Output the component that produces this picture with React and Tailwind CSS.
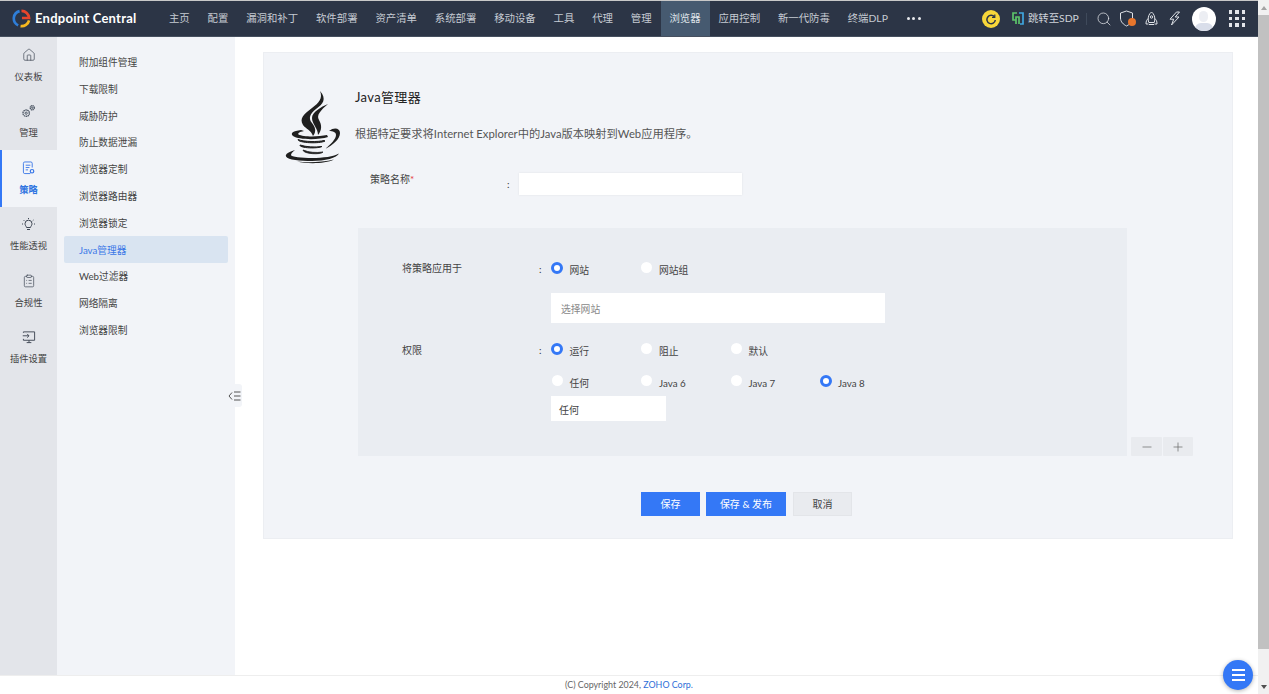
import React from "react";
import { House, ClipboardList, Search, Minus, Plus } from "lucide-react";

const FONT = "[font-family:Lato,'Noto_Sans_CJK_SC',sans-serif]";

const nav = [
  ["主页", false], ["配置", false], ["漏洞和补丁", false], ["软件部署", false], ["资产清单", false],
  ["系统部署", false], ["移动设备", false], ["工具", false], ["代理", false], ["管理", false],
  ["浏览器", true], ["应用控制", false], ["新一代防毒", false], ["终端DLP", false],
];

const subItems = ["附加组件管理", "下载限制", "威胁防护", "防止数据泄漏", "浏览器定制", "浏览器路由器", "浏览器锁定", "Java管理器", "Web过滤器", "网络隔离", "浏览器限制"];

function Logo() {
  return (
    <svg width="19" height="19" viewBox="0 0 20 20" fill="none" strokeWidth="2.8">
      <path d="M8 2.2A8 8 0 0 0 6.5 17.2" stroke="#2f7ed8" />
      <path d="M10 2A8 8 0 0 1 18 9.5H10.500" stroke="#e8452c" />
      <path d="M18 12A8 8 0 0 1 9 18" stroke="#f5b81f" />
    </svg>
  );
}

function GearsIcon() {
  return (
    <svg width="15" height="15" viewBox="0 0 16 16" fill="none" stroke="#4b5563" strokeWidth="1">
      <circle cx="5.5" cy="9.8" r="3.4" strokeDasharray="1.6 .5" strokeWidth="1.4" />
      <circle cx="5.5" cy="9.8" r="1.2" />
      <circle cx="12" cy="4" r="2.2" strokeDasharray="1.2 .4" strokeWidth="1.4" />
      <circle cx="12" cy="4" r=".7" />
    </svg>
  );
}

function PolicyIcon() {
  return (
    <svg width="13" height="14" viewBox="0 0 14 15" fill="none" stroke="#3b78e7" strokeWidth="1">
      <path d="M9 13.5H3a1.5 1.5 0 0 1-1.5-1.5V2.5A1.5 1.5 0 0 1 3 1h6.5A1.5 1.5 0 0 1 11 2.5V7" />
      <path d="M4 4.500h5M4 7h4M4 9.500h2.500" />
      <circle cx="10.8" cy="11" r="1.9" strokeWidth="1.3" />
    </svg>
  );
}

function PluginIcon() {
  return (
    <svg width="14" height="14" viewBox="0 0 15 15" fill="none" stroke="#3f4754" strokeWidth="1">
      <path d="M1.5 3V2h12v9h-12V9.5M5 13.5h5M7.5 11v2.500" />
      <path d="M.8 6.2h6.7M5.5 4.200l2 2-2 2" />
    </svg>
  );
}

function BulbIcon() {
  return (
    <svg width="15" height="15" viewBox="0 0 15 15" fill="none" stroke="#3f4754" strokeWidth="1">
      <path d="M5.5 10.5C5.200 9 4 8.500 4 6.700a3.500 3.500 0 0 1 7 0C11 8.500 9.800 9 9.500 10.500z" />
      <path d="M6 12.500h3M7.500 1v1M2.500 3l.8.8M12.500 3l-.8.8M1 7h1M13 7h1" />
    </svg>
  );
}

function RocketIcon() {
  return (
    <svg className="ml-[9px]" width="13" height="15" viewBox="0 0 13 15" fill="none" stroke="#dfe2e7" strokeWidth="1">
      <path d="M6.5 1C9 3 9.800 5.500 9.800 8c0 1.500-.3 2.700-.6 3.500H3.800C3.500 10.700 3.200 9.500 3.200 8c0-2.500.8-5 3.300-7z" />
      <path d="M3.300 7.500C1.800 8.500 1 10 1 13h2.500M9.700 7.500C11.200 8.500 12 10 12 13H9.500M4 13.500h5" />
      <circle cx="6.500" cy="6" r="1.200" />
    </svg>
  );
}

function BoltIcon() {
  return (
    <svg className="ml-[10px]" width="13" height="15" viewBox="0 0 13 15" fill="none" stroke="#dfe2e7" strokeWidth="1" strokeLinejoin="round">
      <path d="M8.500 1L2 8.200h3.700L3.500 14 11 6H7.200L11.500 1z" />
    </svg>
  );
}

const railItems = [
  ["仪表板", <House size={14} strokeWidth={1.2} color="#3f4754" />, false],
  ["管理", <GearsIcon />, false],
  ["策略", <PolicyIcon />, true],
  ["性能透视", <BulbIcon />, false],
  ["合规性", <ClipboardList size={14} strokeWidth={1.2} color="#3f4754" />, false],
  ["插件设置", <PluginIcon />, false],
];

function JavaIcon() {
  return (
    <svg width="56" height="74" viewBox="0 0 56 74" fill="#1f1f1f">
      <path d="M35 1C38 8 34 13 27 18C19 24 14 28 18 35C21 39 26 40 28 46C32 41 30 37 27 33C23 28 25 24 31 19C38 14 42 9 35 1z" />
      <path d="M43 14C36 17 27 22 27 28C27 34 33 38 33 45C37 40 37 35 34 30C31 25 36 20 43 14z" />
      <path d="M16 40C8 41 5 43 8 46C14 50 34 50 43 47L42 45C33 47 18 47 13.500 44.500C12.500 43.500 14 42 19 41z" />
      <path d="M13 49.500C13 53 35 54 40 51L39 50.500C33 52 19 52 13 49.500z" strokeWidth="1" stroke="#1f1f1f" />
      <path d="M15 55C14 58 32 59 37 56.500C30 57.500 21 57 15 55z" stroke="#1f1f1f" strokeWidth="1" />
      <path d="M18 60C18 64 36 65 38 62C31 63 24 62.500 18 60z" stroke="#1f1f1f" strokeWidth=".8" />
      <path d="M44 41C49 37 55 38 55 43C55 49 48 55 40 59C46 54 51 49 51 45C51 42 48 41 44 41z" />
      <path d="M10 60C4 62 0 64 1 66.500C3 70 15 71 27 71C40 71 52 68 54 63.500C49 66.500 38 68 27 68C17 68 6 67 6 65C6 63 8 62 10 60z" />
      <path d="M12 71.500C22 74 40 74 49 69.500C38 72 24 73 12 71.500z" />
    </svg>
  );
}

function Radio({ on }) {
  return on ? (
    <span className="block w-[12px] h-[12px] rounded-full bg-white border-[3px] border-[#3478f6] shrink-0" />
  ) : (
    <span className="block w-[11px] h-[11px] mx-[0.5px] rounded-full bg-white shrink-0" />
  );
}

function RadioOpt({ label, on }) {
  return (
    <div className="flex items-start gap-[6.5px] w-[89.5px]">
      <Radio on={on} />
      <span className="text-[9.8px] leading-[14px] text-[#444] translate-y-[1px] whitespace-nowrap">{label}</span>
    </div>
  );
}

function Colon() {
  return <span className="w-[11px] text-[10px] leading-[14px] text-[#333]">:</span>;
}

export default function App() {
  return (
    <div className={`flex w-[1269px] h-[694px] overflow-hidden bg-white ${FONT}`}>
      <div className="relative flex flex-col w-[1258px] h-full">
        <header className="flex items-center h-[37px] bg-[#2c3546] border-t border-t-[#c8c8c8] border-b border-b-[#46505f] shrink-0">
          <div className="flex items-center w-[160px] pl-[12px] gap-[4px] shrink-0">
            <Logo />
            <span className="text-[13px] font-bold text-white tracking-[.25px] whitespace-nowrap">Endpoint Central</span>
          </div>
          <nav className="flex items-stretch h-full">
            {nav.map(([t, a]) => (
              <span key={t} className={`flex items-center px-[8.93px] text-[10.4px] whitespace-nowrap ${a ? "bg-[#465a70] text-[#dfe3e8]" : "text-[#c6cbd3]"}`}>{t}</span>
            ))}
            <span className="flex items-center gap-[2.5px] pl-[10px]">
              <i className="block w-[3px] h-[3px] rounded-full bg-[#e8eaee]" />
              <i className="block w-[3px] h-[3px] rounded-full bg-[#e8eaee]" />
              <i className="block w-[3px] h-[3px] rounded-full bg-[#e8eaee]" />
            </span>
          </nav>
          <div className="flex items-center ml-[61px]">
            <span className="flex items-center justify-center w-[18px] h-[18px] rounded-full bg-[#f8d73a]">
              <svg width="12" height="12" viewBox="0 0 12 12" fill="none" stroke="#2c3546" strokeWidth="1.5">
                <path d="M9.5 4A4.200 4.200 0 1 0 10.300 7" />
                <path d="M9.800 1.500V4.300H7" strokeWidth="1.2" />
              </svg>
            </span>
            <svg className="ml-[12px]" width="12" height="13" viewBox="0 0 12 13" fill="none" strokeWidth="1.7">
              <path d="M5 1H1v7h3" stroke="#5cc46a" />
              <path d="M4 12V5h3v7" stroke="#5cc46a" />
              <path d="M7 1h4v11H8" stroke="#3fa6e0" />
            </svg>
            <span className="ml-[4px] text-[10.4px] text-[#cfd3da] whitespace-nowrap">跳转至SDP</span>
            <span className="ml-[7px] w-px h-[12px] bg-[#3f4a5b]" />
            <Search className="ml-[9px]" size={16} strokeWidth={1.1} color="#e6e8ec" />
            <span className="relative ml-[7px] w-[17px] h-[17px]">
              <svg width="15" height="17" viewBox="0 0 15 17" fill="none" stroke="#dfe2e7" strokeWidth="1">
                <path d="M7.5 1l6 2v5c0 4-3 6.500-6 8-3-1.500-6-4-6-8V3z" />
              </svg>
              <span className="absolute right-0 bottom-[1px] w-[8px] h-[8px] rounded-full bg-[#e8762c]" />
            </span>
            <RocketIcon />
            <BoltIcon />
            <span className="relative ml-[11px] w-[24px] h-[24px] rounded-full bg-white overflow-hidden">
              <span className="absolute left-[7.5px] top-[4px] w-[9px] h-[11px] rounded-full bg-[#eceef3]" />
              <span className="absolute left-[3px] top-[16px] w-[18px] h-[12px] rounded-full bg-[#d9deea]" />
            </span>
            <span className="ml-[13px] grid grid-cols-3 gap-[3px]">
              {[0, 1, 2, 3, 4, 5, 6, 7, 8].map((i) => (
                <i key={i} className="block w-[3.5px] h-[3.5px] bg-[#e3e5ea]" />
              ))}
            </span>
          </div>
        </header>

        <div className="flex flex-1 min-h-0">
          <aside className="w-[57px] bg-[#e3e5ea] shrink-0">
            {railItems.map(([t, icon, a]) => (
              <div key={t} className={`flex flex-col items-center h-[56.5px] pt-[10px] gap-[7.5px] ${a ? "bg-[#f2f4f8] border-l-2 border-l-[#3478f6] pr-[2px]" : ""}`}>
                <span className="flex items-center justify-center h-[15px]">{icon}</span>
                <span className={`text-[9.3px] leading-[14px] whitespace-nowrap ${a ? "text-[#2f74e0] font-bold" : "text-[#444]"}`}>{t}</span>
              </div>
            ))}
          </aside>
          <aside className="w-[178px] bg-[#f2f4f8] pt-[11.9px] px-[7px] shrink-0">
            {subItems.map((t) => {
              const a = t === "Java管理器";
              return (
                <div key={t} className={`flex items-center h-[26.8px] pl-[15px] text-[9.7px] whitespace-nowrap rounded-[2px] ${a ? "bg-[#d9e4f1] text-[#3b78e7]" : "text-[#444]"}`}>{t}</div>
              );
            })}
          </aside>
          <main className="flex-1 min-w-0 pl-[28px] pr-[25px] pt-[15px]">
            <section className="h-[487px] bg-[#f2f4f8] border border-[#eceef2] pt-[37px] pl-[21px]">
              <div className="flex">
                <JavaIcon />
                <div className="ml-[14px] -mt-[1px]">
                  <h1 className="text-[13px] leading-[16px] text-[#222] font-normal tracking-[.35px]">Java管理器</h1>
                  <p className="mt-[21px] text-[11.27px] leading-[16px] text-[#555] whitespace-nowrap">根据特定要求将Internet Explorer中的Java版本映射到Web应用程序。</p>
                </div>
              </div>
              <div className="flex items-start mt-[9px] ml-[85px]">
                <span className="w-[137px] text-[10px] leading-[14px] text-[#444] -translate-y-[1px]">策略名称<span className="text-[#e5383b]">*</span></span>
                <span className="w-[12px] text-[10px] leading-[14px] text-[#333] mt-[4px]">:</span>
                <div className="w-[223px] h-[22px] bg-white shadow-[0_0_2px_rgba(0,0,0,0.08)]" />
              </div>
              <div className="flex items-end mt-[33px] ml-[73px]">
                <div className="w-[769px] h-[228px] bg-[#eaedf2] pl-[44px] pt-[34px] shrink-0">
                  <div className="flex items-start">
                    <span className="w-[137px] text-[10px] leading-[14px] text-[#444] -translate-y-[1px]">将策略应用于</span>
                    <Colon />
                    <span className="w-[1px]" />
                    <RadioOpt label="网站" on />
                    <RadioOpt label="网站组" />
                  </div>
                  <div className="ml-[149px] mt-[17px] w-[334px] h-[30px] bg-white flex items-center pl-[10px] pt-[3px] text-[9.8px] text-[#888]">选择网站</div>
                  <div className="flex items-start mt-[20px]">
                    <span className="w-[137px] text-[10px] leading-[14px] text-[#444]">权限</span>
                    <Colon />
                    <span className="w-[1px]" />
                    <RadioOpt label="运行" on />
                    <RadioOpt label="阻止" />
                    <RadioOpt label="默认" />
                  </div>
                  <div className="flex items-start ml-[149px] mt-[18px]">
                    <RadioOpt label="任何" />
                    <RadioOpt label="Java 6" />
                    <RadioOpt label="Java 7" />
                    <RadioOpt label="Java 8" on />
                  </div>
                  <div className="ml-[149px] mt-[7px] w-[115px] h-[25px] bg-white flex items-center pl-[8px] pt-[3px] text-[10px] text-[#444]">任何</div>
                </div>
                <div className="flex gap-[1px] ml-[4px]">
                  <span className="flex items-center justify-center w-[31px] h-[19px] bg-[#e9ebef] rounded-[1px]"><Minus size={14} strokeWidth={1.2} color="#666" /></span>
                  <span className="flex items-center justify-center w-[30px] h-[19px] bg-[#e9ebef] rounded-[1px]"><Plus size={14} strokeWidth={1.2} color="#666" /></span>
                </div>
              </div>
              <div className="flex justify-start mt-[36px] ml-[356px]">
                <span className="flex items-center justify-center w-[59px] h-[24px] bg-[#3478f6] text-white text-[10px]">保存</span>
                <span className="flex items-center justify-center w-[80px] h-[24px] ml-[6px] bg-[#3478f6] text-white text-[10px]">保存 &amp; 发布</span>
                <span className="flex items-center justify-center w-[59px] h-[24px] ml-[7px] bg-[#e9ebef] border border-[#e3e5e9] text-[#444] text-[10px]">取消</span>
              </div>
            </section>
          </main>
        </div>

        <footer className="h-[19px] shrink-0 border-t border-[#eeeeee] bg-white flex items-center justify-center text-[8.9px] text-[#666]">
          (C) Copyright 2024,&nbsp;<span className="text-[#2f6fd8]">ZOHO Corp.</span>
        </footer>

        <div className="absolute left-[226px] top-[384px] w-[16px] h-[23px] bg-[#f2f4f8] rounded-r-[3px] flex items-center justify-center">
          <svg width="13" height="10" viewBox="0 0 13 10" fill="none" stroke="#555" strokeWidth="1">
            <path d="M4 1.500L1 5l3 3.500M6 1h6.500M6 5h6.500M6 9h6.500" />
          </svg>
        </div>

        <div className="absolute left-[1223px] top-[660px] w-[30px] h-[30px] rounded-full bg-[#3478f6] shadow-[0_1px_4px_rgba(0,0,0,0.3)] flex flex-col items-center justify-center gap-[3.5px]">
          <i className="block w-[13px] h-[1.5px] bg-white" />
          <i className="block w-[13px] h-[1.5px] bg-white" />
          <i className="block w-[13px] h-[1.5px] bg-white" />
        </div>
      </div>

      <div className="flex flex-col w-[11px] h-full bg-[#f1f1f1] shrink-0">
        <div className="flex items-center justify-center h-[15px]">
          <span className="w-0 h-0 border-x-[3px] border-x-transparent border-b-[4px] border-b-[#a3a3a3]" />
        </div>
        <div className="h-[634px] bg-[#c1c1c1]" />
        <div className="flex-1 flex items-end justify-center pb-[5px]">
          <span className="w-0 h-0 border-x-[3px] border-x-transparent border-t-[4px] border-t-[#505050]" />
        </div>
      </div>
    </div>
  );
}
